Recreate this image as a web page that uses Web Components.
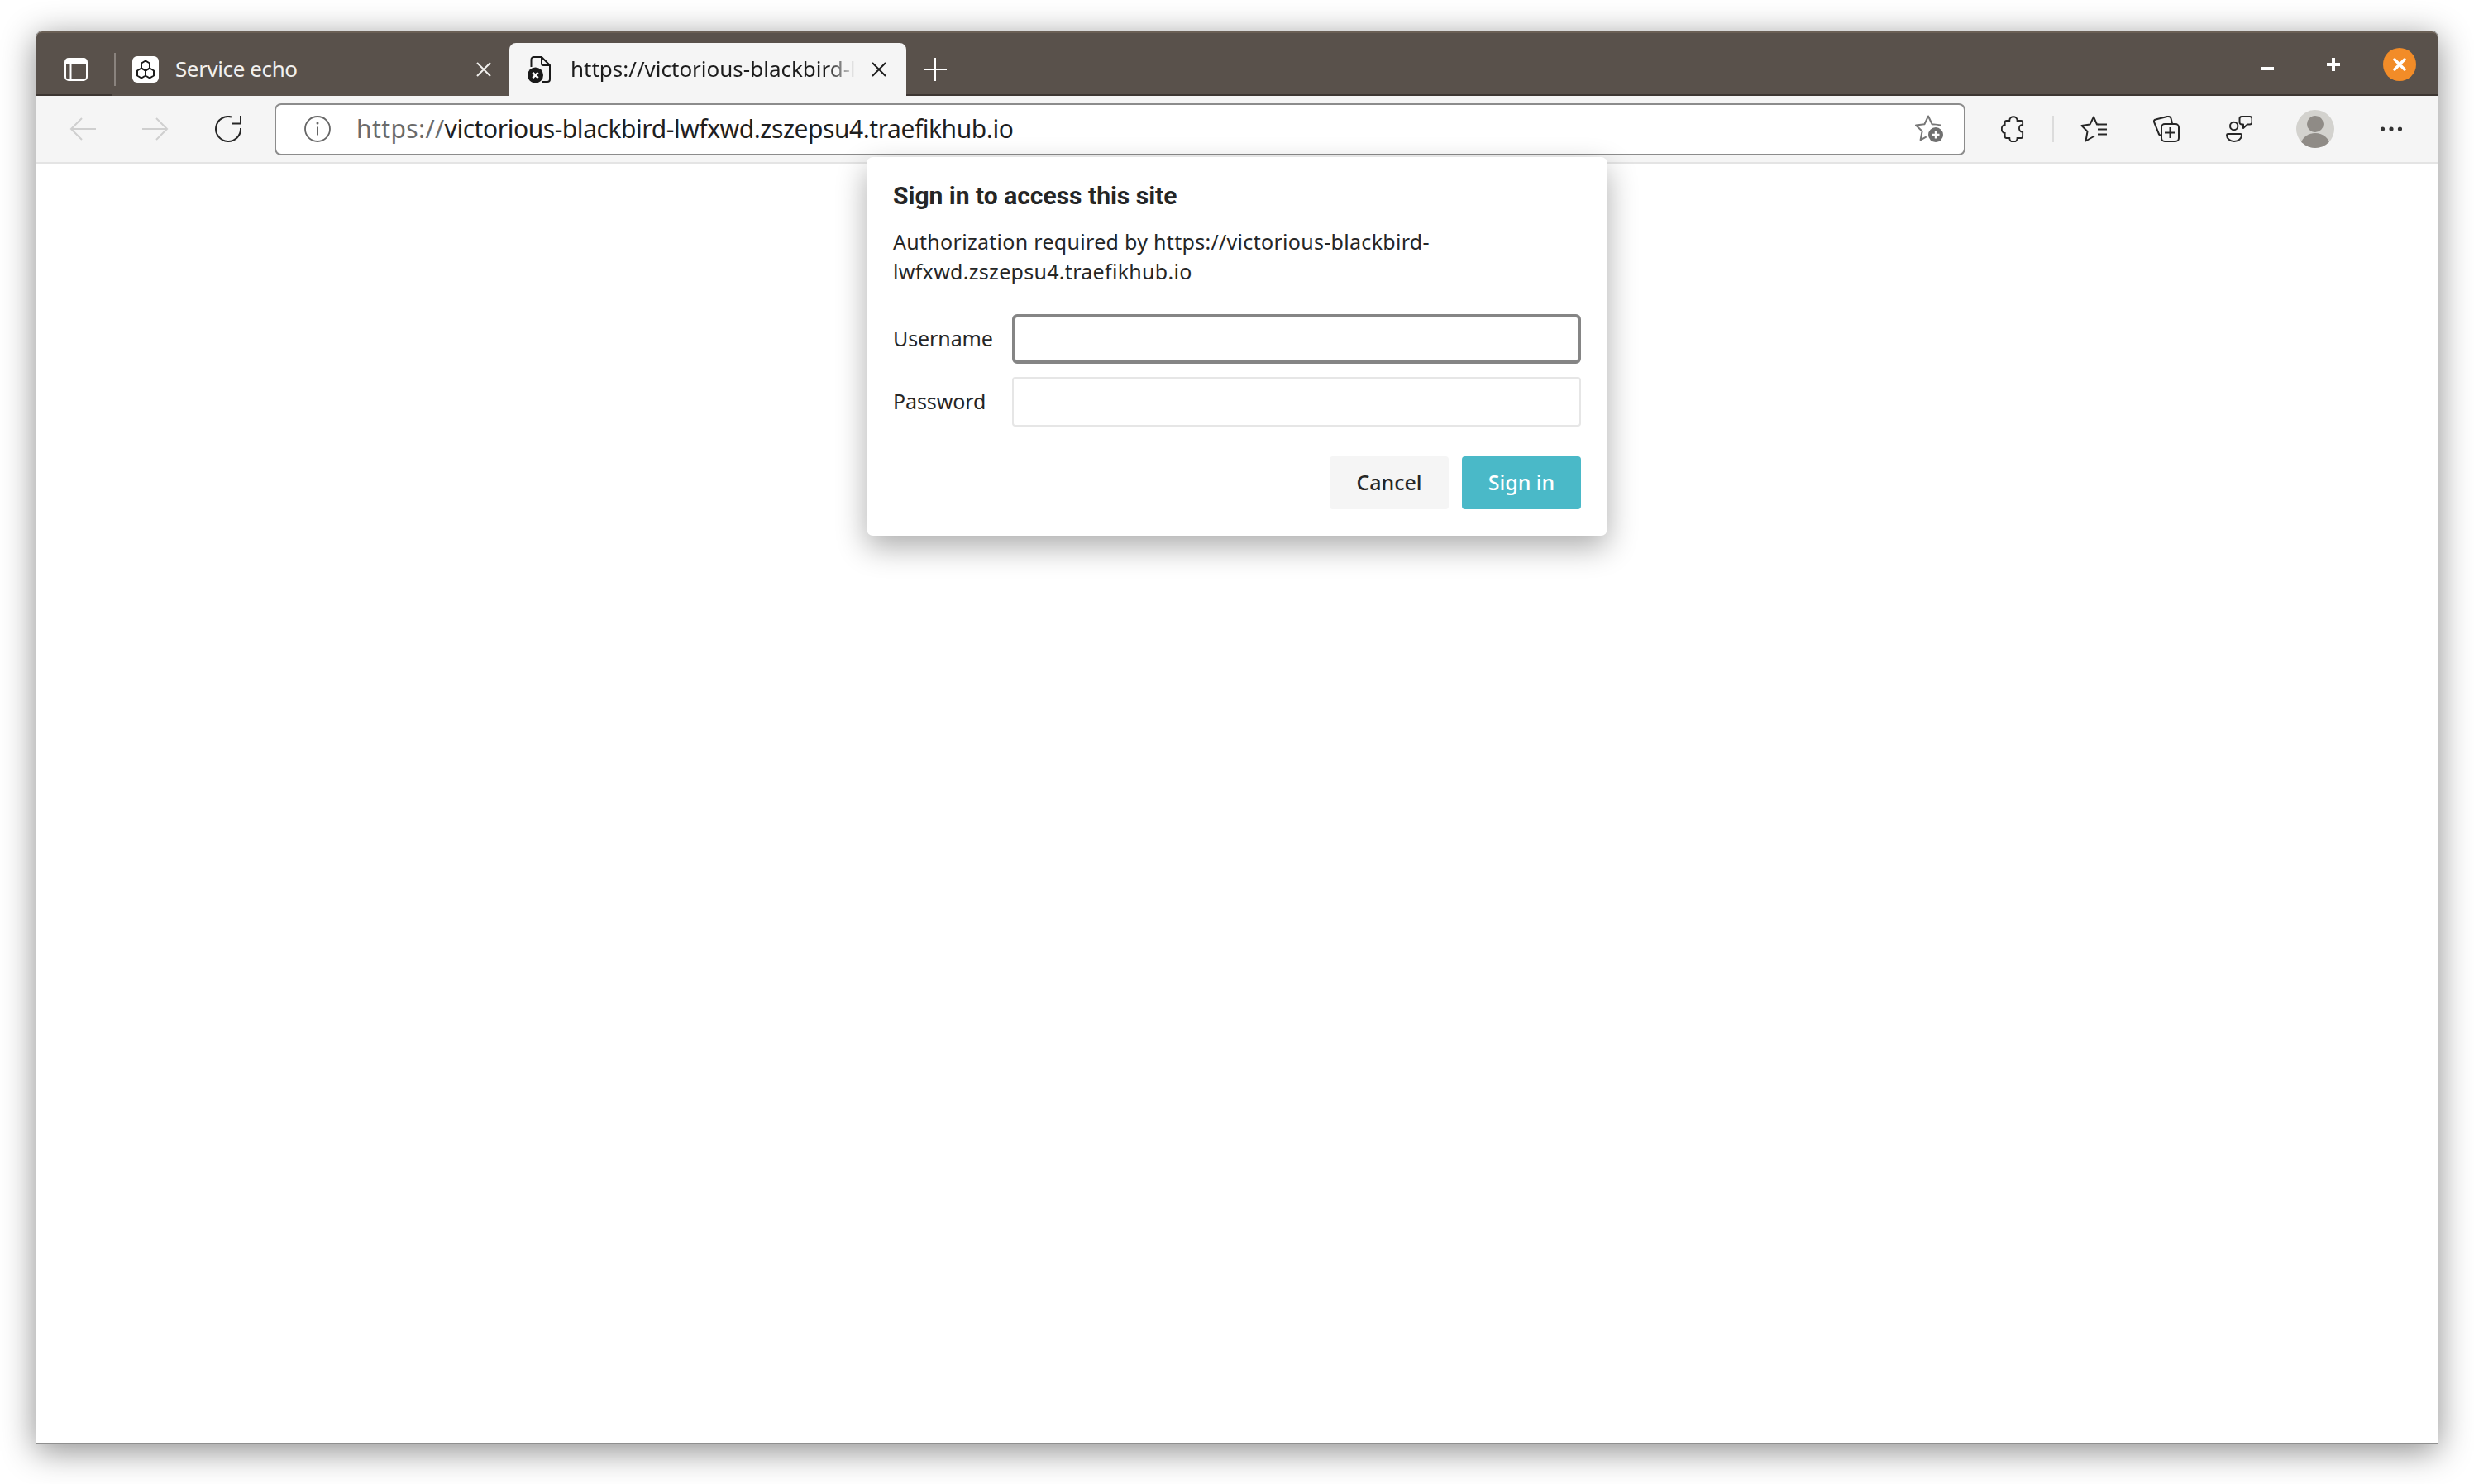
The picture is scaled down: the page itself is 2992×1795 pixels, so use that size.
<!doctype html>
<html>
<head>
<meta charset="utf-8">
<style>
  html, body { margin: 0; height: 100%; background: #fff; }
  body { font-family: "Noto Sans", "Open Sans", sans-serif; }
</style>
</head>
<body>
<browser-window>
  <browser-tab slot="tabs" label="Service echo" kind="hex"></browser-tab>
  <browser-tab slot="tabs" label="https://victorious-blackbird-l" kind="err" active></browser-tab>
  <auth-dialog></auth-dialog>
</browser-window>

<script>
class BrowserTab extends HTMLElement {
  constructor() {
    super();
    this.attachShadow({ mode: 'open' });
  }
  connectedCallback() {
    const active = this.hasAttribute('active');
    const hex = `<svg width="32" height="32" viewBox="0 0 32 32"><rect width="32" height="32" rx="6" fill="#fff"/><g fill="none" stroke="#1a1a1a" stroke-width="2" stroke-linejoin="round"><path d="M16 5.500l5 3v6l-5 3-5-3v-6z"/><path d="M11 14.500l5 3v6l-5 3-5-3v-6z"/><path d="M21 14.500l5 3v6l-5 3-5-3v-6z"/></g></svg>`;
    const err = `<svg width="32" height="32" viewBox="0 0 32 32"><g fill="none" stroke="#1a1a1a" stroke-width="2"><path d="M4.500 13V4a3 3 0 0 1 3-3H17l10 10v17a3 3 0 0 1-3 3h-7"/><path d="M17 1v8a2 2 0 0 0 2 2h8"/></g><circle cx="9.500" cy="23" r="9.500" fill="#1a1a1a"/><path d="M6.300 19.800l6.400 6.400m0-6.400l-6.400 6.400" stroke="#fff" stroke-width="2.600"/></svg>`;
    this.shadowRoot.innerHTML = `
      <style>
        :host { display: flex; align-items: center; box-sizing: border-box; height: 64px; font-size: 26px; letter-spacing: ${active ? '0' : '-.4px'}; color: ${active ? '#1c1c1c' : '#f2f0ee'}; background: ${active ? '#f5f5f5' : 'transparent'}; border-radius: 8px 8px 0 0; }
        :host([active]) { width: 480px; padding: 0 5px 0 22px; }
        :host(:not([active])) { width: 456px; padding: 0 3px 0 0; }
        .label { flex: 1; min-width: 0; white-space: nowrap; margin-left: 20px; padding-bottom: 2px; -webkit-mask-image: ${active ? 'linear-gradient(to right, #000 90%, transparent 100%)' : 'none'}; }
        .close { width: 56px; display: flex; justify-content: center; }
      </style>
      ${this.getAttribute('kind') === 'hex' ? hex : err}
      <span class="label">${this.getAttribute('label')}</span>
      <span class="close"><svg width="18" height="18" viewBox="0 0 18 18"><path d="M1 1l16 16M17 1L1 17" stroke="currentColor" stroke-width="2" fill="none"/></svg></span>`;
  }
}

class BrowserWindow extends HTMLElement {
  constructor() {
    super();
    this.attachShadow({ mode: 'open' });
    this.shadowRoot.innerHTML = `
      <style>
        :host { display: block; box-sizing: border-box; height: 100%; padding: 37px 43px 48px 43px; }
        .win { position: relative; display: flex; flex-direction: column; height: 100%; box-sizing: border-box; border: 1px solid #8f8f8f; border-radius: 8px 8px 0 0; box-shadow: 0 8px 40px rgba(0,0,0,.45); background: #fff; }
        .tabbar { position: relative; display: flex; align-items: flex-end; height: 78px; flex: none; background: #59514b; border-radius: 7px 7px 0 0; border-top: 2px solid #6a5f55; box-sizing: border-box; }
        .side { display: flex; align-items: center; height: 64px; padding: 0 0 0 34px; color: #fff; }
        .sep { width: 2px; height: 40px; background: #8a837e; margin: 0 20px 0 32px; }
        .new { display: flex; align-items: center; height: 64px; padding: 0 0 0 21px; }
        .caption { margin-left: auto; align-self: stretch; display: flex; align-items: center; padding-right: 26px; }
        .caption .min { margin-right: 64px; }
        .caption .max { margin-right: 52px; }
        .close-btn { width: 40px; height: 40px; border-radius: 50%; background: #f28c28; display: flex; align-items: center; justify-content: center; }
        .edge { position: absolute; bottom: 0; height: 2px; background: #3d3632; }
        .edge.l { left: 0; width: 91px; }
        .edge.r { left: 1052px; right: 0; }
        .toolbar { display: flex; align-items: center; height: 82px; flex: none; box-sizing: border-box; background: #f5f5f5; border-bottom: 2px solid #e4e4e4; padding-left: 40px; }
        .nav { display: flex; align-items: center; gap: 56px; margin-right: 40px; }
        .omni { flex: none; width: 2045px; height: 63px; box-sizing: border-box; background: #fff; border: 2px solid #8c8c8c; border-radius: 8px; display: flex; align-items: center; padding: 0 25px 0 34px; font-size: 30px; letter-spacing: -.45px; color: #1f1f1f; }
        .url { margin-left: 31px; flex: 1; white-space: nowrap; padding-bottom: 2px; }
        .url span { color: #6b6b6b; letter-spacing: .4px; }
        .tools { display: flex; align-items: center; flex: 1; padding-left: 43px; }
        .vsep { width: 2px; height: 32px; background: #dcdcdc; margin: 0 32px 0 34px; }
        .page { position: relative; flex: 1; background: #fff; }
        .avatar { margin: 0 56px 0 53px; }
        .g { margin-right: 56px; }
      </style>
      <div class="win">
        <div class="tabbar">
          <div class="edge l"></div>
          <div class="edge r"></div>
          <div class="side">
            <svg width="28" height="28" viewBox="0 0 28 28"><rect x="1" y="1" width="26" height="26" rx="4" fill="none" stroke="#fff" stroke-width="2"/><path d="M1 5a4 4 0 0 1 4-4h18a4 4 0 0 1 4 4v3H1z" fill="#fff"/><path d="M7.500 8v19" stroke="#fff" stroke-width="2"/></svg>
            <div class="sep"></div>
          </div>
          <slot name="tabs"></slot>
          <div class="new"><svg width="28" height="28" viewBox="0 0 28 28"><path d="M14 0v28M0 14h28" stroke="#fff" stroke-width="2"/></svg></div>
          <div class="caption">
            <svg class="min" width="16" height="16" viewBox="0 0 16 16"><path d="M0 13h16" stroke="#fff" stroke-width="4"/></svg>
            <svg class="max" width="16" height="16" viewBox="0 0 16 16"><path d="M8 0v16M0 8h16" stroke="#fff" stroke-width="4"/></svg>
            <div class="close-btn"><svg width="16" height="16" viewBox="0 0 16 16"><path d="M2 2l12 12M14 2L2 14" stroke="#fff" stroke-width="3.500" stroke-linecap="round"/></svg></div>
          </div>
        </div>
        <div class="toolbar">
          <div class="nav">
            <svg width="32" height="28" viewBox="0 0 32 28"><path d="M32 14H2M15 1L2 14l13 13" fill="none" stroke="#cfcfcf" stroke-width="2"/></svg>
            <svg width="32" height="28" viewBox="0 0 32 28"><path d="M0 14h30M17 1l13 13-13 13" fill="none" stroke="#cfcfcf" stroke-width="2"/></svg>
            <svg width="32" height="32" viewBox="0 0 32 32"><path d="M20 1.500A15 15 0 1 0 31 15" fill="none" stroke="#262626" stroke-width="2"/><path d="M20 9.500h11V0" fill="none" stroke="#262626" stroke-width="2"/></svg>
          </div>
          <div class="omni">
            <svg width="32" height="32" viewBox="0 0 32 32"><circle cx="16" cy="16" r="15" fill="none" stroke="#666" stroke-width="1.800"/><path d="M16 13.500v10" stroke="#666" stroke-width="2"/><circle cx="16" cy="9" r="1.500" fill="#666"/></svg>
            <div class="url"><span>https://</span>victorious-blackbird-lwfxwd.zszepsu4.traefikhub.io</div>
            <svg width="34" height="34" viewBox="0 0 34 34"><path d="M16 1.500l4.600 9.700 10.400 1.300-7.600 7.300 2 10.500-9.400-5.200-9.400 5.200 2-10.500L1 12.500l10.400-1.300z" fill="none" stroke="#777" stroke-width="2" stroke-linejoin="round"/><circle cx="25" cy="24" r="11.500" fill="#fff"/><circle cx="25" cy="24" r="9" fill="#707070"/><path d="M25 19.500v9M20.500 24h9" stroke="#fff" stroke-width="2.400"/></svg>
          </div>
          <div class="tools">
            <svg width="28" height="32" viewBox="-1 0 30 32" preserveAspectRatio="none"><path d="M10 6C10-.5 20-.5 20 6h5a2 2 0 0 1 2 2v3c-6-.5-6 9 0 8.500V25a2 2 0 0 1-2 2h-5c0 6-10 6-10 0H6a2 2 0 0 1-2-2v-4c-5.500 0-5.500-10 0-10V8a2 2 0 0 1 2-2z" fill="none" stroke="#262626" stroke-width="2"/></svg>
            <div class="vsep"></div>
            <svg class="g" width="32" height="32" viewBox="0 0 32 32"><path d="M21.500 10.500H20L16 1.500l-4.500 9-10 1.500 7 7-2 11.500L17 24.500" fill="none" stroke="#262626" stroke-width="2" stroke-linejoin="round"/><path d="M21 10.500h11M21 16.500h11M21 22.500h11" stroke="#262626" stroke-width="2"/></svg>
            <svg class="g" width="32" height="32" viewBox="0 0 32 32"><path d="M9.500 24Q7 23.500 6.500 21L1 7.500Q.5 5 3 4.500L17 1q3.500-.5 4.500 2l1.500 6" fill="none" stroke="#262626" stroke-width="2"/><rect x="10" y="10" width="21" height="21" rx="4" fill="none" stroke="#262626" stroke-width="2"/><path d="M20.500 14v13M14 20.500h13" stroke="#262626" stroke-width="2"/></svg>
            <svg width="32" height="32" viewBox="0 0 32 32"><circle cx="9.700" cy="12.500" r="4.700" fill="none" stroke="#262626" stroke-width="2"/><path d="M2 22h15.500q1.500 0 1.500 1.500a9 7.500 0 0 1-18 0Q1 22 2 22z" fill="none" stroke="#262626" stroke-width="2"/><path d="M19 1h10a2.500 2.500 0 0 1 2.500 2.500V8a2.500 2.500 0 0 1-2.500 2.500h-3L21 15v-4.500h-2A2.500 2.500 0 0 1 16.500 8V3.500A2.500 2.500 0 0 1 19 1z" fill="none" stroke="#262626" stroke-width="2" stroke-linejoin="round"/></svg>
            <svg class="avatar" width="46" height="46" viewBox="0 0 46 46"><clipPath id="c"><circle cx="23" cy="23" r="23"/></clipPath><g clip-path="url(#c)"><rect width="46" height="46" fill="#d3d2ce"/><circle cx="23" cy="17" r="10" fill="#8f8b86"/><ellipse cx="23" cy="44" rx="18" ry="16" fill="#8f8b86"/></g></svg>
            <svg width="26" height="6" viewBox="0 0 26 6"><circle cx="2.500" cy="3" r="2.600" fill="#333"/><circle cx="13" cy="3" r="2.600" fill="#333"/><circle cx="23.500" cy="3" r="2.600" fill="#333"/></svg>
          </div>
        </div>
        <div class="page"><slot></slot></div>
      </div>`;
  }
}

class AuthDialog extends HTMLElement {
  constructor() {
    super();
    this.attachShadow({ mode: 'open' });
    this.shadowRoot.innerHTML = `
      <style>
        :host { position: absolute; left: 1004px; top: -8px; width: 896px; box-sizing: border-box; padding: 29px 32px 32px; background: #fff; border-radius: 8px; box-shadow: 0 14px 36px rgba(0,0,0,.32); color: #262626; font-size: 25px; }
        h1 { margin: 0; font-family: Roboto, sans-serif; font-size: 30px; line-height: 36px; font-weight: 700; }
        p { margin: 19px 0 0; line-height: 36px; width: 700px; letter-spacing: .3px; }
        .rows { display: grid; grid-template-columns: 144px 1fr; gap: 16px 0; align-items: center; margin-top: 34px; letter-spacing: -.1px; }
        .rows span { padding-bottom: 3px; }
        .field { height: 60px; box-sizing: border-box; border: 2px solid #e6e6e6; border-radius: 4px; }
        .field.focus { border: 4px solid #858585; border-radius: 6px; }
        .buttons { display: flex; justify-content: flex-end; gap: 16px; margin-top: 36px; }
        .btn { width: 144px; height: 64px; box-sizing: border-box; padding-bottom: 3px; border-radius: 4px; display: flex; align-items: center; justify-content: center; background: #f5f5f5; font-weight: 500; }
        .btn.primary { background: #4ab9c8; color: #fff; }
      </style>
      <h1>Sign in to access this site</h1>
      <p>Authorization required by https://victorious-blackbird-lwfxwd.zszepsu4.traefikhub.io</p>
      <div class="rows">
        <span>Username</span><div class="field focus"></div>
        <span>Password</span><div class="field"></div>
      </div>
      <div class="buttons">
        <div class="btn">Cancel</div>
        <div class="btn primary">Sign in</div>
      </div>`;
  }
}

customElements.define('browser-tab', BrowserTab);
customElements.define('browser-window', BrowserWindow);
customElements.define('auth-dialog', AuthDialog);
</script>
</body>
</html>
